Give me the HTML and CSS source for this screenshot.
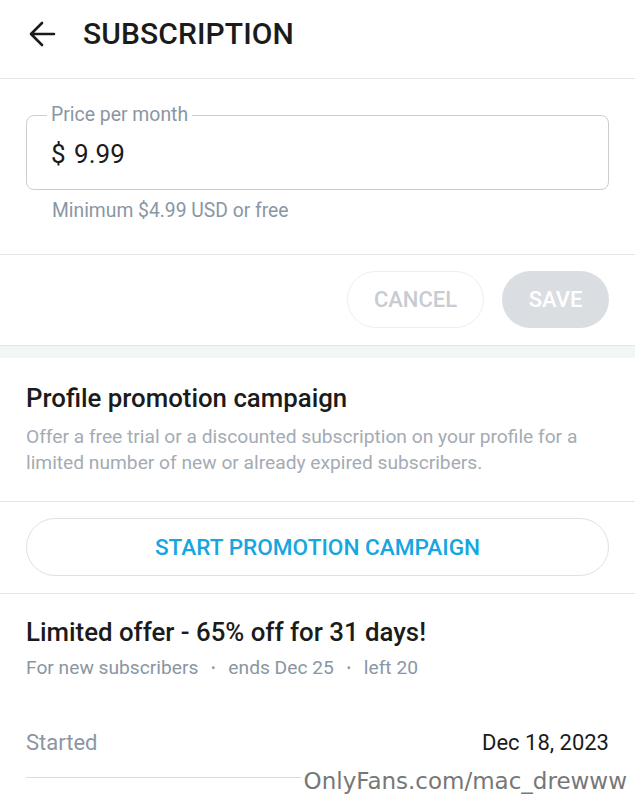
FILE: index.html
```html
<!DOCTYPE html>
<html lang="en">
<head>
    <meta charset="UTF-8">
    <title>Subscription</title>
    <link rel="stylesheet" href="styles.css">
</head>
<body>
    <div class="page">
        <header class="top-bar">
            <svg class="back" width="30" height="30" viewBox="0 0 30 30" fill="none" stroke="#1b1b1b" stroke-width="2.6" stroke-linecap="round" stroke-linejoin="round">
                <path d="M27 15H4M15 4L4 15l11 11"/>
            </svg>
            <h1>SUBSCRIPTION</h1>
        </header>

        <section class="price">
            <fieldset class="price-box">
                <legend>Price per month</legend>
                <div class="price-value">$ 9.99</div>
            </fieldset>
            <p class="hint">Minimum $4.99 USD or free</p>
        </section>

        <div class="actions">
            <button class="btn-cancel">CANCEL</button>
            <button class="btn-save">SAVE</button>
        </div>

        <div class="spacer"></div>

        <section class="promo">
            <h2>Profile promotion campaign</h2>
            <p class="promo-text">Offer a free trial or a discounted subscription on your profile for a limited number of new or already expired subscribers.</p>
        </section>

        <div class="promo-action">
            <button class="btn-promo">START PROMOTION CAMPAIGN</button>
        </div>

        <section class="offer">
            <h2>Limited offer - 65% off for 31 days!</h2>
            <div class="offer-meta">
                <span>For new subscribers</span>
                <span class="dot">•</span>
                <span>ends Dec 25</span>
                <span class="dot">•</span>
                <span>left 20</span>
            </div>
            <div class="offer-row">
                <span class="row-label">Started</span>
                <span class="row-value">Dec 18, 2023</span>
            </div>
        </section>

        <div class="watermark">OnlyFans.com/mac_drewww</div>
    </div>
</body>
</html>
```

FILE: styles.css
```css
body {
    margin: 0;
    font-family: Roboto, "Liberation Sans", sans-serif;
    background: #fff;
    color: #1b1b1b;
}

.page {
    position: relative;
    width: 635px;
    height: 800px;
    overflow: hidden;
}

.top-bar {
    display: flex;
    align-items: center;
    gap: 26px;
    height: 79px;
    padding: 0 26px 0 27px;
    border-bottom: 1px solid #e2e4e6;
    box-sizing: border-box;
}

.top-bar h1 {
    margin: 0;
    font-size: 30px;
    font-weight: 500;
    letter-spacing: 0.1px;
    padding-bottom: 11px;
}

.back {
    margin-bottom: 11px;
}

.price {
    padding: 25px 26px 0;
    border-bottom: 1px solid #e2e4e6;
    height: 176px;
    box-sizing: border-box;
}

.price-box {
    margin: 0;
    padding: 0 24px;
    height: 86px;
    box-sizing: border-box;
    border: 1.5px solid #c9ced3;
    border-radius: 8px;
    display: flex;
    align-items: center;
}

.price-box legend {
    font-size: 19.4px;
    color: #8a96a3;
    padding: 0 4px;
    margin-left: -4px;
    line-height: 22px;
}

.price-value {
    font-size: 26px;
    margin-top: -8px;
    word-spacing: 2px;
}

.hint {
    margin: 10px 0 0 26px;
    font-size: 19.3px;
    line-height: 22px;
    color: #8a96a3;
}

.actions {
    display: flex;
    justify-content: flex-end;
    gap: 18px;
    padding: 16px 26px 17px;
    border-bottom: 1px solid #e2e4e6;
}

.actions button {
    height: 57px;
    border-radius: 29px;
    font-family: inherit;
    font-size: 22px;
    font-weight: 500;
}

.btn-cancel {
    width: 137px;
    background: #fff;
    border: 1px solid #eceef0;
    color: #c8ccd1;
}

.btn-save {
    width: 107px;
    background: #dadde2;
    border: none;
    color: #fff;
}

.spacer {
    height: 12px;
    background: #f0f8f6;
}

.promo {
    padding: 25px 26px 25px;
    border-bottom: 1px solid #e2e4e6;
}

.promo h2,
.offer h2 {
    margin: 0;
    font-size: 25.8px;
    font-weight: 500;
    line-height: 30px;
}

.promo-text {
    margin: 11px 0 0;
    font-size: 19.2px;
    line-height: 26px;
    color: #a4abb3;
}

.promo-action {
    padding: 16px 26px 17px;
    border-bottom: 1px solid #e2e4e6;
}

.btn-promo {
    width: 100%;
    height: 58px;
    border: 1px solid #dfe2e5;
    border-radius: 29px;
    background: #fff;
    font-family: inherit;
    font-size: 22.6px;
    font-weight: 500;
    color: #16a6e0;
}

.offer {
    padding: 23px 26px 0;
}

.offer-meta {
    display: flex;
    align-items: center;
    gap: 13px;
    margin-top: 9px;
    font-size: 19.2px;
    line-height: 24px;
    color: #8a96a3;
}

.offer-meta .dot {
    font-size: 12px;
}

.offer-row {
    display: flex;
    justify-content: space-between;
    margin-top: 50px;
    padding-bottom: 21px;
    font-size: 22px;
    line-height: 26px;
    border-bottom: 1px solid #d8dbde;
}

.row-label {
    color: #8a96a3;
}

.watermark {
    position: absolute;
    right: 8px;
    bottom: 6px;
    font-family: "DejaVu Sans", sans-serif;
    font-size: 23px;
    color: #777;
    background: #fff;
    padding-left: 3px;
}
```
